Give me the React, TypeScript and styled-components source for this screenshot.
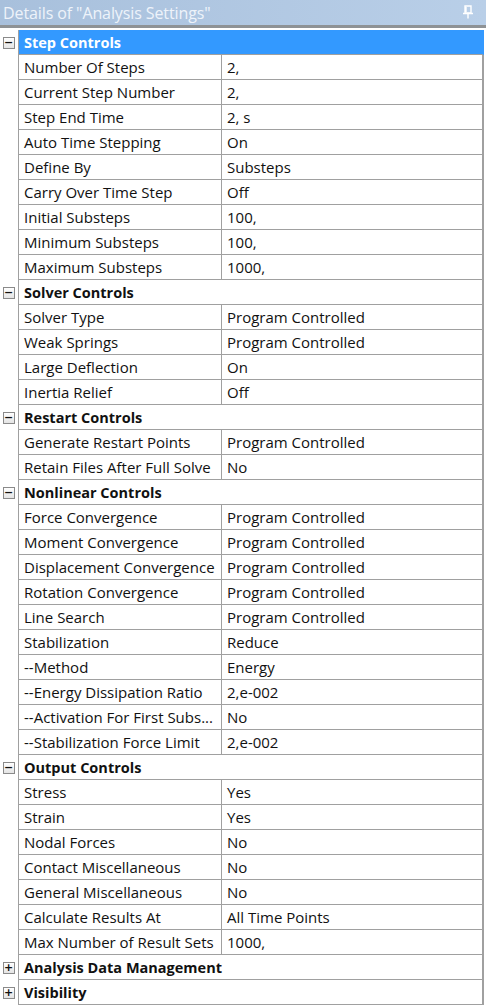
import React from "react";
import styled, { createGlobalStyle } from "styled-components";

type Item = [string, string];
type Group = { title: string; open: boolean; selected?: boolean; items: Item[] };

const groups: Group[] = [
  {
    title: "Step Controls",
    open: true,
    selected: true,
    items: [
      ["Number Of Steps", "2,"],
      ["Current Step Number", "2,"],
      ["Step End Time", "2, s"],
      ["Auto Time Stepping", "On"],
      ["Define By", "Substeps"],
      ["Carry Over Time Step", "Off"],
      ["Initial Substeps", "100,"],
      ["Minimum Substeps", "100,"],
      ["Maximum Substeps", "1000,"],
    ],
  },
  {
    title: "Solver Controls",
    open: true,
    items: [
      ["Solver Type", "Program Controlled"],
      ["Weak Springs", "Program Controlled"],
      ["Large Deflection", "On"],
      ["Inertia Relief", "Off"],
    ],
  },
  {
    title: "Restart Controls",
    open: true,
    items: [
      ["Generate Restart Points", "Program Controlled"],
      ["Retain Files After Full Solve", "No"],
    ],
  },
  {
    title: "Nonlinear Controls",
    open: true,
    items: [
      ["Force Convergence", "Program Controlled"],
      ["Moment Convergence", "Program Controlled"],
      ["Displacement Convergence", "Program Controlled"],
      ["Rotation Convergence", "Program Controlled"],
      ["Line Search", "Program Controlled"],
      ["Stabilization", "Reduce"],
      ["--Method", "Energy"],
      ["--Energy Dissipation Ratio", "2,e-002"],
      ["--Activation For First Subs...", "No"],
      ["--Stabilization Force Limit", "2,e-002"],
    ],
  },
  {
    title: "Output Controls",
    open: true,
    items: [
      ["Stress", "Yes"],
      ["Strain", "Yes"],
      ["Nodal Forces", "No"],
      ["Contact Miscellaneous", "No"],
      ["General Miscellaneous", "No"],
      ["Calculate Results At", "All Time Points"],
      ["Max Number of Result Sets", "1000,"],
    ],
  },
  { title: "Analysis Data Management", open: false, items: [] },
  { title: "Visibility", open: false, items: [] },
];

const Details: React.FC = () => (
  <StyledPanel>
    <StyledTitleBar>
      <StyledTitle>Details of "Analysis Settings"</StyledTitle>
      <svg width="12" height="14" viewBox="0 0 12 14">
        <path d="M3 1h6v7H3z M4 2v5" fill="none" stroke="#ffffff" strokeWidth="1.4" />
        <path d="M1 8.5h10 M6 8.5v5" stroke="#ffffff" strokeWidth="1.4" />
      </svg>
    </StyledTitleBar>
    <StyledGrid>
      {groups.map((g) => (
        <React.Fragment key={g.title}>
          <StyledRow>
            <StyledGutter>
              <StyledToggle>{g.open ? "−" : "+"}</StyledToggle>
            </StyledGutter>
            <StyledGroupCell selected={g.selected}>{g.title}</StyledGroupCell>
          </StyledRow>
          {g.items.map(([label, value]) => (
            <StyledRow key={label}>
              <StyledGutter />
              <StyledLabel>{label}</StyledLabel>
              <StyledValue>{value}</StyledValue>
            </StyledRow>
          ))}
        </React.Fragment>
      ))}
    </StyledGrid>
  </StyledPanel>
);

const GlobalStyle = createGlobalStyle`
  body {
    margin: 0;
    background: #ffffff;
    font-family: "Open Sans", "Noto Sans", "Liberation Sans", sans-serif;
  }
`;

const StyledPanel = styled.div`
  width: 486px;
  height: 1007px;
  background: #ffffff;
  overflow: hidden;
`;

const StyledTitleBar = styled.div`
  height: 25px;
  display: flex;
  align-items: center;
  justify-content: space-between;
  padding: 0 12px 0 3px;
  background: linear-gradient(to right, #a8c0dc, #b9cfe8);
  border-bottom: 3px solid #8e9295;
  margin-bottom: 2px;
  svg {
    margin-top: -2px;
  }
`;

const StyledTitle = styled.span`
  color: #eef3fa;
  font-size: 16px;
  letter-spacing: -0.1px;
`;

const StyledGrid = styled.div`
  display: flex;
  flex-direction: column;
  width: 484px;
`;

const StyledRow = styled.div`
  display: grid;
  grid-template-columns: 18px 204px 1fr;
  height: 25px;
`;

const StyledGutter = styled.div`
  display: flex;
  align-items: center;
  justify-content: center;
  padding-right: 1px;
`;

const StyledToggle = styled.span`
  width: 10px;
  height: 10px;
  border: 1px solid #8a8a8a;
  background: linear-gradient(#ffffff, #e4e4e4);
  display: flex;
  align-items: center;
  justify-content: center;
  font-family: "DejaVu Sans", sans-serif;
  font-weight: bold;
  font-size: 11px;
  line-height: 1;
  color: #111111;
`;

const Cell = styled.div`
  box-sizing: border-box;
  height: 25px;
  display: flex;
  align-items: center;
  border-bottom: 1px solid #a0a0a0;
  font-size: 15px;
  color: #111111;
  white-space: nowrap;
  overflow: hidden;
`;

const StyledGroupCell = styled(Cell)<{ selected?: boolean }>`
  grid-column: 2 / 4;
  padding-left: 5px;
  font-size: 14.5px;
  font-weight: 700;
  border-left: 1px solid #a0a0a0;
  border-right: 2px solid #a0a0a0;
  background: ${(p) => (p.selected ? "#3399ff" : "#ffffff")};
  color: ${(p) => (p.selected ? "#ffffff" : "#111111")};
  ${(p) => (p.selected ? "border-right-color: #3399ff;" : "")}
`;

const StyledLabel = styled(Cell)`
  padding-left: 5px;
  border-left: 1px solid #a0a0a0;
  border-right: 1px solid #a0a0a0;
`;

const StyledValue = styled(Cell)`
  padding-left: 5px;
  border-right: 2px solid #a0a0a0;
`;

export default function App() {
  return (
    <>
      <GlobalStyle />
      <Details />
    </>
  );
}
